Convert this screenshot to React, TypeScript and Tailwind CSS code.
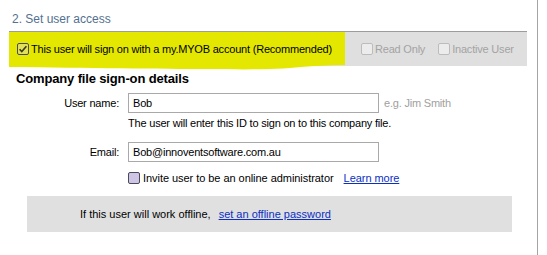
import React from "react";

const CheckBox = ({ checked, disabled }: { checked?: boolean; disabled?: boolean }) => (
  <svg width="12" height="12" viewBox="0 0 12 12" className="shrink-0">
    <rect
      x="0.5"
      y="0.5"
      width="11"
      height="11"
      rx="1.5"
      fill={disabled ? "#ececec" : checked ? "#e2e05a" : "#cfc6e6"}
      stroke={disabled ? "#bcbcbc" : "#4a4a5a"}
    />
    {checked && (
      <path d="M2.6 6.2 L4.8 8.6 L9.4 3.2" fill="none" stroke="#3a3a1a" strokeWidth="1.6" />
    )}
  </svg>
);

const Field = ({ label, value, hint }: { label: string; value: string; hint?: string }) => (
  <div className="flex items-center whitespace-nowrap">
    <span className="w-[119px] pr-[9px] text-right">{label}</span>
    <div className="flex h-[20px] w-[251px] items-center border border-[#a9a9a9] bg-white pl-[4px]">
      {value}
    </div>
    {hint && <span className="ml-[5px] text-[#a0a0a0]">{hint}</span>}
  </div>
);

export default function App() {
  return (
    <div className="relative h-[255px] w-[547px] overflow-hidden bg-white font-['Liberation_Sans',Arial,sans-serif] text-[11px] leading-[14px] tracking-[-0.2px] text-black">
      <div className="h-full w-[538px] border-r border-[#a4a4a4] pl-[9px] pr-[10px]">
        <div className="border-b border-[#9c9c9c] pb-[5px] pl-[3px] pt-[12px] text-[12px] leading-[14px] tracking-normal text-[#53718f]">
          2. Set user access
        </div>

        <div className="relative flex h-[34px] items-center whitespace-nowrap bg-[#dfdfdf] pl-[8px]">
          <svg
            className="pointer-events-none absolute left-0 top-0 overflow-visible"
            width="337"
            height="38"
            viewBox="0 0 337 38"
          >
            <path
              d="M0 0 L336 0 L336 33 C320 33 305 34 292 35 C272 37 250 38 200 37 C150 37 80 36 0 35 Z"
              fill="#e4e800"
            />
          </svg>
          <div className="relative flex shrink-0 items-center gap-[2px]">
            <CheckBox checked />
            <span>This user will sign on with a my.MYOB account (Recommended)</span>
          </div>
          <div className="relative ml-[29px] flex shrink-0 items-center gap-[2px] text-[#a3a3a3]">
            <CheckBox disabled />
            <span>Read Only</span>
          </div>
          <div className="relative ml-[13px] flex shrink-0 items-center gap-[2px] text-[#a3a3a3]">
            <CheckBox disabled />
            <span>Inactive User</span>
          </div>
        </div>

        <div className="relative whitespace-nowrap pl-[7px] pt-[5px] text-[13px] font-bold leading-[16px] tracking-[-0.15px]">
          Company file sign-on details
        </div>

        <div className="mt-[6px]">
          <Field label="User name:" value="Bob" hint="e.g. Jim Smith" />
          <div className="mt-[3px] whitespace-nowrap pl-[119px]">
            The user will enter this ID to sign on to this company file.
          </div>
          <div className="mt-[12px]">
            <Field label="Email:" value="Bob@innoventsoftware.com.au" />
          </div>
          <div className="mt-[9px] flex h-[14px] items-center gap-[3px] whitespace-nowrap pl-[119px] tracking-[-0.05px]">
            <CheckBox />
            <span>Invite user to be an online administrator</span>
            <a href="#" className="ml-[7px] text-[#0b2fc4] underline">
              Learn more
            </a>
          </div>
        </div>

        <div className="ml-[18px] mt-[11px] flex h-[36px] w-[485px] items-center whitespace-nowrap bg-[#e0e0e0] pl-[53px] tracking-normal">
          <span>If this user will work offline,</span>
          <a href="#" className="ml-[8px] text-[#0b2fc4] underline">
            set an offline password
          </a>
        </div>
      </div>
    </div>
  );
}
